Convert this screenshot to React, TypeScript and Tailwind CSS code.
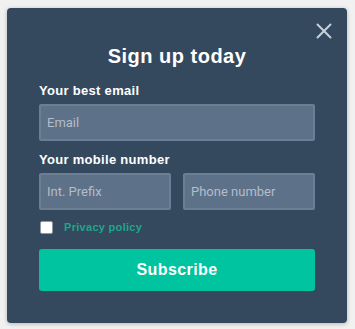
import { X } from 'lucide-react'

export default function App() {
  return (
    <div className="w-[355px] h-[329px] bg-[#f1f1f1] pt-[8px] pl-[7px]">
      <div
        className="relative w-[340px] h-[315px] bg-[#34495e] rounded-[4px] shadow-[0_1px_4px_rgba(0,0,0,0.25)] px-[32px] pt-[36px]"
        style={{ fontFamily: '"Liberation Sans", Arial, sans-serif' }}
      >
        <button className="absolute right-[10px] top-[10px] text-[#c9d0d8]">
          <X size={26} strokeWidth={1.8} />
        </button>

        <h1 className="text-center text-white text-[20px] font-bold tracking-[0.5px] leading-[24px]">
          Sign up today
        </h1>

        <label className="block mt-[15px] text-white text-[13px] font-bold tracking-[0.3px] leading-[16px]">
          Your best email
        </label>
        <input
          type="text"
          placeholder="Email"
          className="mt-[5px] block w-full h-[37px] bg-[#5d7189] border-2 border-[#6b7e94] rounded-[2px] px-[6px] text-[13px] text-white placeholder:text-[#b4bdc8] outline-none"
          style={{ fontFamily: 'Roboto, sans-serif' }}
        />

        <label className="block mt-[11px] text-white text-[13px] font-bold tracking-[0.3px] leading-[16px]">
          Your mobile number
        </label>
        <div className="mt-[5px] flex gap-[12px]">
          <input
            type="text"
            placeholder="Int. Prefix"
            className="block w-[132px] h-[37px] bg-[#5d7189] border-2 border-[#6b7e94] rounded-[2px] px-[6px] text-[13px] text-white placeholder:text-[#b4bdc8] outline-none"
            style={{ fontFamily: 'Roboto, sans-serif' }}
          />
          <input
            type="text"
            placeholder="Phone number"
            className="block w-[132px] h-[37px] bg-[#5d7189] border-2 border-[#6b7e94] rounded-[2px] px-[6px] text-[13px] text-white placeholder:text-[#b4bdc8] outline-none"
            style={{ fontFamily: 'Roboto, sans-serif' }}
          />
        </div>

        <div className="mt-[10px] flex items-center h-[14px]">
          <span className="ml-[1px] w-[13px] h-[13px] bg-white border border-[#8f9aa6] rounded-[2px]" />
          <span className="ml-[11px] text-[11px] font-bold tracking-[0.3px] text-[#1fa58b]">
            Privacy policy
          </span>
        </div>

        <button className="mt-[15px] w-full h-[42px] bg-[#00c4a0] rounded-[3px] text-white text-[16px] font-bold tracking-[0.4px]">
          Subscribe
        </button>
      </div>
    </div>
  )
}
